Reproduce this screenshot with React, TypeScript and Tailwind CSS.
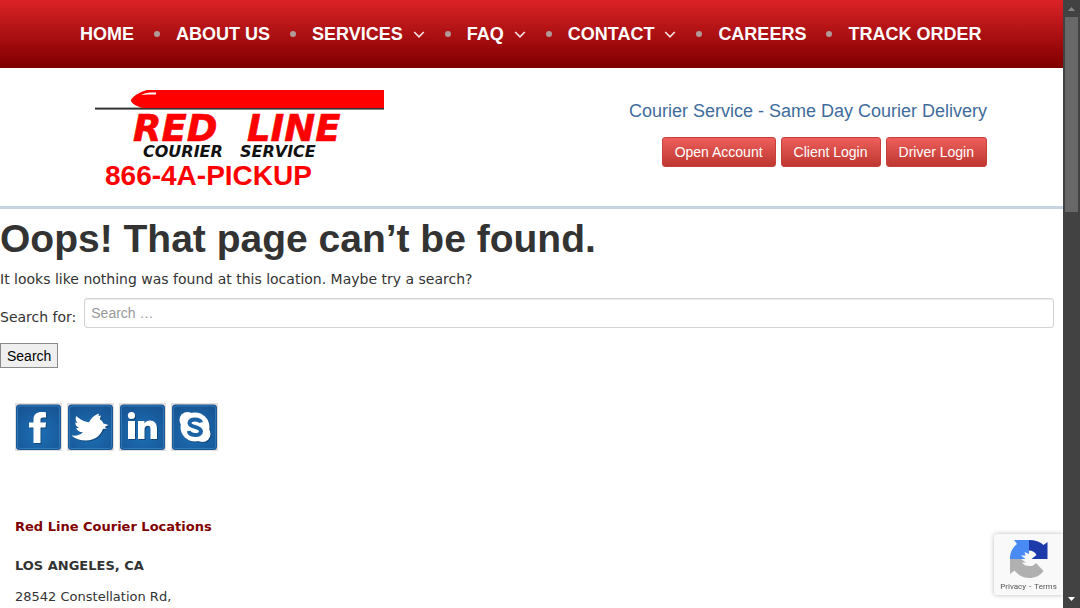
import React from 'react';

type NavItem = { label: string; menu?: boolean };

const navItems: NavItem[] = [
  { label: 'HOME' },
  { label: 'ABOUT US' },
  { label: 'SERVICES', menu: true },
  { label: 'FAQ', menu: true },
  { label: 'CONTACT', menu: true },
  { label: 'CAREERS' },
  { label: 'TRACK ORDER' },
];

const accountLinks = ['Open Account', 'Client Login', 'Driver Login'];

function Chevron() {
  return (
    <svg className="ml-2.5 h-3 w-3" viewBox="0 0 12 12" fill="none" stroke="#f6e4e4" strokeWidth="1.6" aria-hidden="true">
      <path d="M1.2 4 L6 8.8 L10.8 4" />
    </svg>
  );
}

function MainNav() {
  return (
    <nav className="h-[68px] bg-linear-to-b from-[#db2226] to-[#800000] pl-20">
      <ul className="flex h-full items-center text-lg font-bold whitespace-nowrap text-white">
        {navItems.map((item, i) => (
          <li key={item.label} className="flex items-center">
            {i > 0 && <span className="mr-4 ml-5 h-1.5 w-1.5 rounded-full bg-[#b39a9a]" />}
            <a href="#" className="flex items-center">
              {item.label}
              {item.menu && <Chevron />}
            </a>
          </li>
        ))}
      </ul>
    </nav>
  );
}

function Logo() {
  return (
    <svg className="h-20 w-[290px]" viewBox="0 0 290 80" role="img" aria-label="Red Line Courier Service">
      <rect x="0" y="19.6" width="289" height="2" fill="#333" />
      <path d="M289 2 H54 C47 2 36 9 36 12.5 C36 15 41 18 47 20 H289 Z" fill="#fe0000" />
      <path d="M46 7 Q50 4.5 55 4.5 H61 V6.5 H53 Z" fill="#fff" />
      <g fontFamily="'DejaVu Sans', sans-serif" fontWeight="700" fontStyle="italic">
        <g fill="#fe0000" stroke="#fe0000" strokeWidth="0.6" fontSize="37">
          <text x="38" y="53">RED</text>
          <text x="152" y="53">LINE</text>
        </g>
        <g fill="#111" fontSize="16">
          <text x="48" y="69">COURIER</text>
          <text x="145" y="69">SERVICE</text>
        </g>
      </g>
    </svg>
  );
}

function Header() {
  return (
    <header className="flex h-[141px] justify-between border-b-3 border-[#c6d4e1] pr-[76px] pl-[95px]">
      <div className="pt-5">
        <Logo />
        <p className="-mt-2 pl-2.5 text-[28px] leading-8 font-bold text-[#fe0000]">866-4A-PICKUP</p>
      </div>
      <div className="flex flex-col items-end pt-[31px]">
        <p className="text-lg leading-6 text-[#3f6c9c]">Courier Service - Same Day Courier Delivery</p>
        <div className="mt-3.5 flex gap-[5px]">
          {accountLinks.map((label) => (
            <a
              key={label}
              href="#"
              className="rounded-[3px] border border-[#c9403b] bg-linear-to-b from-[#ee5f5b] to-[#bd362f] px-3 py-1 text-sm leading-5 text-white"
            >
              {label}
            </a>
          ))}
        </div>
      </div>
    </header>
  );
}

function SearchForm() {
  return (
    <form className="mt-[9px]" onSubmit={(e) => e.preventDefault()}>
      <div className="flex items-center pr-[9px]">
        <label htmlFor="site-search" className="mr-2 pt-2 whitespace-nowrap">
          Search for:
        </label>
        <input
          id="site-search"
          type="search"
          placeholder="Search …"
          className="h-[30px] min-w-0 flex-1 rounded-[3px] border border-[#d2d2d2] px-1.5 font-['Liberation_Sans',sans-serif] text-sm shadow-[inset_0_1px_1px_rgba(0,0,0,0.075)] placeholder:text-[#999]"
        />
      </div>
      <button
        type="submit"
        className="mt-[15px] h-[25px] border border-[#8a8a8a] bg-[#efefef] px-1.5 font-['Liberation_Sans',sans-serif] text-sm leading-5 text-black"
      >
        Search
      </button>
    </form>
  );
}

const socialIcons = [
  {
    name: 'Facebook',
    glyph: <path d="M18.5 40 V24.5 H14 V19.500 H18.5 V16.500 C18.5 11 22 9 26.500 9 C28.500 9 30 9.200 31 9.400 V14.500 H28.500 C26.200 14.500 25.500 15.300 25.500 17 V19.500 H31 L30.500 24.5 H25.500 V40 Z" />,
  },
  {
    name: 'Twitter',
    glyph: (
      <path d="M4.500 32.500 C10 33 13 32 16 29.500 C12 29 10 27.500 9.200 25 H12 C9.500 23.500 8.300 22 8.300 19.500 L10.500 20 C8.500 17.500 8 15.500 9.500 13 C13.500 17 17 18.500 22 19.200 C24 15.500 27 12 32 10.500 L31.500 13 L34 12.500 C33.500 14 33 15 33 16.500 C34.500 17.500 36 19 36.500 20.500 L41.500 22 L37.500 24 L40 25.500 L36 26 C33.500 32.500 28 37.500 19 37.500 C13 37.500 8 36 4.500 32.500 Z" />
    ),
  },
  {
    name: 'LinkedIn',
    glyph: (
      <>
        <circle cx="12.500" cy="12.500" r="3.600" />
        <path d="M9 18 H16 V36 H9 Z M19 18 H25.5 V20.500 C26.500 18.500 28.500 17.500 31 17.500 C35.500 17.500 38 20.500 38 25.500 V36 H31.5 V26.500 C31.5 24 31 22.700 28.800 22.700 C26.400 22.700 25.5 24.300 25.5 27 V36 H19 Z" />
      </>
    ),
  },
  {
    name: 'Skype',
    glyph: (
      <>
        <circle cx="24" cy="24" r="14.500" />
        <circle cx="16.500" cy="17" r="8" />
        <circle cx="31.500" cy="31" r="8" />
        <path
          d="M30 19.5 C29 15.500 18.500 15 18.500 20 C18.500 25 30 22.800 30 28.500 C30 33.500 18.500 33 17.800 28"
          fill="none"
          stroke="#1a63a4"
          strokeWidth="4"
        />
      </>
    ),
  },
];

function SocialLinks() {
  return (
    <div className="flex gap-1">
      {socialIcons.map(({ name, glyph }) => (
        <a key={name} href="#" aria-label={name}>
          <svg className="h-12 w-12" viewBox="0 0 48 48" aria-hidden="true">
            <defs>
              <radialGradient id={`tile-${name}`} cx="50%" cy="65%" r="75%">
                <stop offset="0" stopColor="#1d6fb5" />
                <stop offset="1" stopColor="#175493" />
              </radialGradient>
            </defs>
            <rect width="47" height="48" fill="#e2dedb" />
            <rect x="1" y="1.500" width="45" height="45.500" rx="3.500" fill="#1a5795" />
            <rect x="2.500" y="3" width="42" height="42.500" rx="2.500" fill={`url(#tile-${name})`} stroke="#2f78b8" />
            <g fill="#0b355f" opacity="0.6" transform="translate(1 1)">{glyph}</g>
            <g fill="#fff">{glyph}</g>
          </svg>
        </a>
      ))}
    </div>
  );
}

function RecaptchaBadge() {
  return (
    <div className="fixed right-[17px] bottom-[13px] flex h-[61px] w-[69px] flex-col items-center rounded-l-[3px] bg-[#f9f9f9] pt-1.5 shadow-[0_0_5px_#bbb]">
      <svg className="h-[38px] w-[38px]" viewBox="0 0 38 38" aria-hidden="true">
        <path d="M19 0 C25 0 30 1.500 33.500 5 L37.500 2 V19 H21.500 L26.500 15 C25 12 22.500 10.500 19 10.500 Z" fill="#1c3aa9" />
        <path d="M19 0 H4 L7 4 C2 8 0 13 0 19 H10 L15.500 19 L11 15.500 H15.500 L14.500 12 L19 14 Z" fill="#4a8af4" />
        <path d="M0 19 V34 L4.500 30.500 C8 35 13 38 19 38 C25 38 30.500 35.500 33.500 31 L26 23 C24 25.500 22 26 19.500 26 C16 26 13.500 25 12 22.500 H16 L11 19 Z" fill="#b0b0b0" />
      </svg>
      <p className="flex gap-[3px] pt-1 font-[Roboto,sans-serif] text-[8px] leading-[10px] text-[#555]">
        <a href="#">Privacy</a>
        <span>-</span>
        <a href="#">Terms</a>
      </p>
    </div>
  );
}

function ScrollRail() {
  return (
    <div className="sticky top-0 z-10 flex h-screen w-[17px] shrink-0 flex-col items-center bg-[#424242]" aria-hidden="true">
      <svg className="h-[17px] w-[17px] shrink-0" viewBox="0 0 17 17">
        <path d="M5 11 L8.500 7 L12 11 Z" fill="#868686" />
      </svg>
      <div className="h-[195px] w-[13px] bg-[#686868]" />
      <svg className="mt-auto h-[17px] w-[17px] shrink-0" viewBox="0 0 17 17">
        <path d="M5 6 L8.500 10 L12 6 Z" fill="#fff" />
      </svg>
    </div>
  );
}

export default function App() {
  return (
    <div className="flex min-h-screen bg-white font-['Liberation_Sans',sans-serif] text-[#333]">
      <div className="min-w-0 flex-1">
        <MainNav />
        <Header />
        <main className="font-['DejaVu_Sans',sans-serif] text-sm leading-5">
          <h1 className="pt-2.5 font-['Liberation_Sans',sans-serif] text-[39px] leading-10 font-bold">
            Oops! That page can’t be found.
          </h1>
          <p className="mt-2.5">It looks like nothing was found at this location. Maybe try a search?</p>
          <SearchForm />
        </main>
        <footer className="px-[15px] pt-[35px] font-['DejaVu_Sans',sans-serif] text-[13px] leading-5">
          <SocialLinks />
          <h2 className="mt-[66px] font-bold text-[#800000]">Red Line Courier Locations</h2>
          <h3 className="mt-[19px] font-bold">LOS ANGELES, CA</h3>
          <p className="mt-[11px]">28542 Constellation Rd,</p>
        </footer>
      </div>
      <ScrollRail />
      <RecaptchaBadge />
    </div>
  );
}
